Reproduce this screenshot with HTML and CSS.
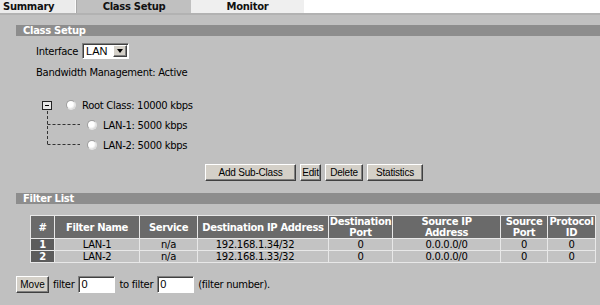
FILE: index.html
```html
<!DOCTYPE html>
<html>
<head>
<meta charset="utf-8">
<link rel="stylesheet" href="styles.css">
</head>
<body>
<div class="tabs">
  <div class="tab tab-summary">Summary</div>
  <div class="tab tab-active">Class Setup</div>
  <div class="tab tab-monitor">Monitor</div>
</div>
<div class="main">
  <div class="bar">Class Setup</div>
  <div class="iface-row">
    <span>Interface</span>
    <div class="select"><span class="select-val">LAN</span><span class="select-btn"><span class="tri"></span></span></div>
  </div>
  <div class="bw">Bandwidth Management: Active</div>
  <div class="tree">
    <svg class="connectors" width="40" height="60" viewBox="0 0 40 60">
      <path d="M6.5 16 V50 M6.5 29.5 H39 M6.5 49.5 H39" stroke="#333" stroke-width="1" stroke-dasharray="3 2" fill="none"/>
    </svg>
    <div class="tree-row root">
      <span class="toggle"><span class="minus"></span></span>
      <span class="radio"></span>
      <span>Root Class: 10000 kbps</span>
    </div>
    <div class="tree-row child">
      <span class="radio"></span>
      <span>LAN-1: 5000 kbps</span>
    </div>
    <div class="tree-row child">
      <span class="radio"></span>
      <span>LAN-2: 5000 kbps</span>
    </div>
  </div>
  <div class="btn-row">
    <button class="btn b-add">Add Sub-Class</button>
    <button class="btn b-edit">Edit</button>
    <button class="btn b-del">Delete</button>
    <button class="btn b-stat">Statistics</button>
  </div>
  <div class="bar bar2">Filter List</div>
  <table class="flist">
    <colgroup>
      <col class="c1"><col class="c2"><col class="c3"><col class="c4"><col class="c5"><col class="c6"><col class="c7"><col class="c8">
    </colgroup>
    <tr>
      <th>#</th><th>Filter Name</th><th>Service</th><th>Destination IP Address</th><th>Destination<br>Port</th><th>Source IP<br>Address</th><th>Source<br>Port</th><th>Protocol<br>ID</th>
    </tr>
    <tr>
      <td class="num">1</td><td>LAN-1</td><td>n/a</td><td class="ip">192.168.1.34/32</td><td>0</td><td>0.0.0.0/0</td><td>0</td><td>0</td>
    </tr>
    <tr>
      <td class="num">2</td><td>LAN-2</td><td>n/a</td><td class="ip">192.168.1.33/32</td><td>0</td><td>0.0.0.0/0</td><td>0</td><td>0</td>
    </tr>
  </table>
  <div class="move-row">
    <button class="btn b-move">Move</button>
    <span>filter</span>
    <span class="input">0</span>
    <span>to filter</span>
    <span class="input">0</span>
    <span>(filter number).</span>
  </div>
</div>
</body>
</html>
```
FILE: styles.css
```css
html, body {
  margin: 0;
  padding: 0;
}
body {
  background: #c0c0c0;
  font-family: "DejaVu Sans", Verdana, sans-serif;
  font-size: 10px;
  letter-spacing: -0.3px;
  color: #000;
  height: 305px;
  overflow: hidden;
}
.tabs {
  display: flex;
  height: 13px;
  background: #fff;
}
.tab {
  font-weight: bold;
  font-size: 10px;
  line-height: 13px;
  text-align: center;
  color: #111;
}
.tab-summary {
  width: 76px;
  text-align: left;
  padding-left: 3px;
  box-sizing: border-box;
  background: #ebebeb;
  border-right: 1px solid #fafafa;
}
.tab-active {
  width: 115px;
  background: #c0c0c0;
  border-left: 1px solid #a8a8a8;
  box-sizing: border-box;
}
.tab-monitor {
  width: 113px;
  background: #efefef;
}
.main {
  border-top: 2px solid #b2b2b2;
  padding-left: 16px;
}
.bar {
  margin-top: 10px;
  height: 11px;
  line-height: 11px;
  background: #8d8d8d;
  color: #fff;
  font-weight: bold;
  padding-left: 7px;
}
.bar2 {
  margin-top: 12px;
}
.iface-row {
  display: flex;
  align-items: center;
  margin-top: 7px;
  padding-left: 20px;
  height: 16px;
}
.select {
  margin-left: 4px;
  width: 47px;
  height: 16px;
  box-sizing: border-box;
  background: #fff;
  border: 1px solid;
  border-color: #808080 #fff #fff #808080;
  box-shadow: inset 1px 1px #404040;
  display: flex;
  font-family: "Liberation Sans", Arial, sans-serif;
  font-size: 11px;
  letter-spacing: 0;
  line-height: 13px;
}
.select-val {
  flex: 1;
  padding-left: 3px;
  padding-top: 1px;
}
.select-btn {
  width: 14px;
  margin: 1px 1px 1px 0;
  background: #d4d0c8;
  border: 1px solid;
  border-color: #fff #404040 #404040 #fff;
  box-shadow: inset -1px -1px #808080;
  box-sizing: border-box;
  display: flex;
  align-items: center;
  justify-content: center;
}
.tri {
  width: 0;
  height: 0;
  border-left: 3.5px solid transparent;
  border-right: 3.5px solid transparent;
  border-top: 4px solid #000;
  margin-right: 1px;
}
.bw {
  margin-top: 8px;
  padding-left: 20px;
  line-height: 12px;
}
.tree {
  position: relative;
  margin-top: 16px;
  padding-left: 26px;
}
.connectors {
  position: absolute;
  left: 25px;
  top: 0;
}
.tree-row {
  height: 20px;
  display: flex;
  align-items: center;
}
.toggle {
  width: 10px;
  height: 9px;
  box-sizing: border-box;
  border: 1px solid #222;
  background: #e6e6e6;
  display: flex;
  align-items: center;
  justify-content: center;
  margin-right: 14px;
}
.minus {
  width: 4px;
  height: 1px;
  background: #000;
}
.radio {
  width: 10px;
  height: 10px;
  box-sizing: border-box;
  border-radius: 50%;
  border: 1px solid;
  border-color: #a0a0a0 #e4e4e4 #e4e4e4 #a0a0a0;
  background: radial-gradient(circle at 40% 40%, #fff 40%, #ececec 62%, #b4b4b4 100%);
  margin-right: 6px;
}
.child {
  padding-left: 45px;
}
.btn-row {
  display: flex;
  gap: 4px;
  margin-top: 9px;
  padding-left: 189px;
}
.btn {
  height: 17px;
  padding: 0;
  margin: 0;
  box-sizing: border-box;
  background: #d4d0c8;
  border: 1px solid;
  border-color: #fff #404040 #404040 #fff;
  box-shadow: inset -1px -1px #808080;
  font-family: "Liberation Sans", Arial, sans-serif;
  font-size: 10px;
  letter-spacing: -0.2px;
  color: #000;
  line-height: 14px;
}
.b-add { width: 91px; }
.b-edit { width: 21px; }
.b-del { width: 38px; }
.b-stat { width: 56px; }
.b-move { width: 33px; letter-spacing: 0; }
.flist {
  margin-top: 11px;
  margin-left: 14px;
  border-collapse: collapse;
  table-layout: fixed;
  width: 565px;
  border-top: 1px solid #f0f0f0;
  border-left: 1px solid #f0f0f0;
  border-right: 1px solid #6a6a6a;
  border-bottom: 1px solid #6a6a6a;
}
.c1 { width: 24px; }
.c2 { width: 85px; }
.c3 { width: 58px; }
.c4 { width: 131px; }
.c5 { width: 64px; }
.c6 { width: 108px; }
.c7 { width: 47px; }
.c8 { width: 48px; }
.flist th, .flist td {
  border: 1px solid #e8e8e8;
  padding: 0;
  text-align: center;
  line-height: 11px;
  white-space: nowrap;
  overflow: hidden;
}
.flist th {
  background: #6a6a6a;
  color: #fff;
  font-weight: bold;
  height: 22px;
  letter-spacing: -0.35px;
}
.flist td {
  background: #c3c3c3;
  height: 11px;
}
.flist td.num {
  background: #5c5c5c;
  color: #fff;
  font-weight: bold;
}
.flist td.ip {
  padding-right: 16px;
}
.move-row {
  margin-top: 13px;
  display: flex;
  align-items: center;
  gap: 4px;
}
.input {
  width: 37px;
  height: 17px;
  box-sizing: border-box;
  background: #fff;
  border: 1px solid;
  border-color: #808080 #fff #fff #808080;
  box-shadow: inset 1px 1px #404040;
  font-family: "Liberation Sans", Arial, sans-serif;
  font-size: 11px;
  letter-spacing: 0;
  line-height: 14px;
  padding-left: 2px;
}
```
